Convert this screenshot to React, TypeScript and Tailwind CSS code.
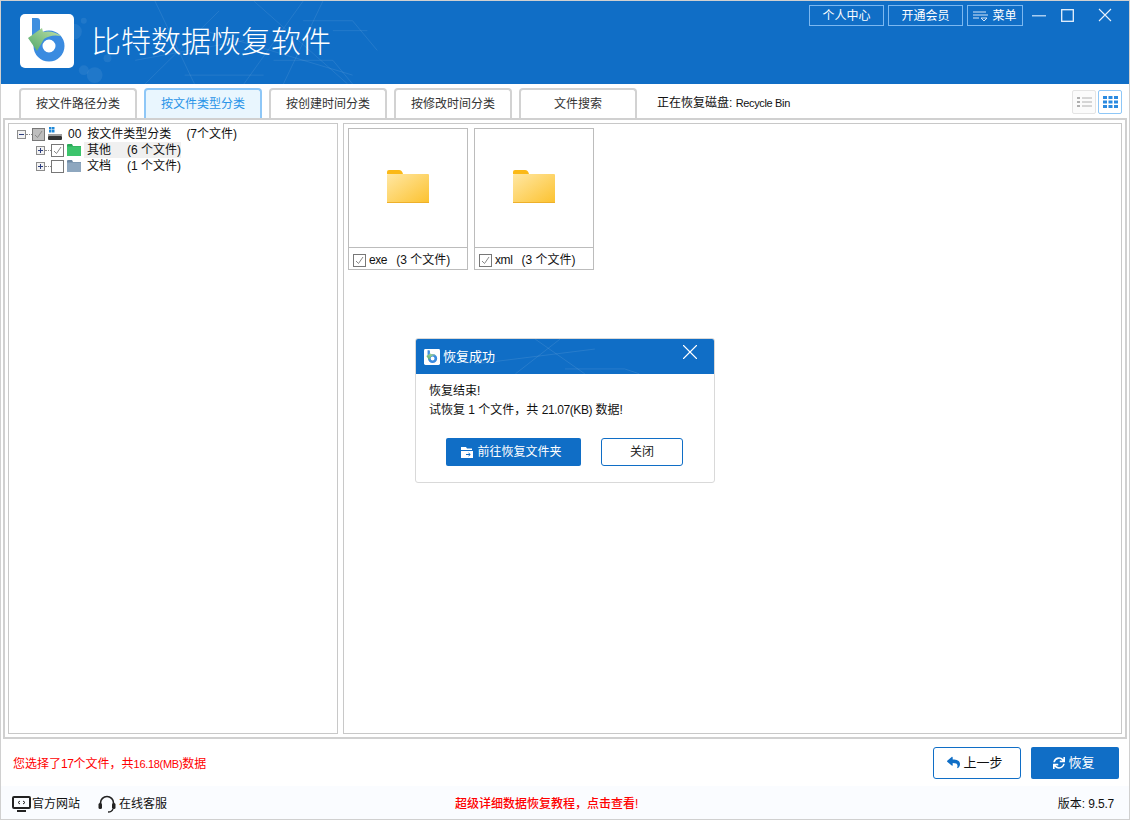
import { X } from 'lucide-react';
import { FaReply, FaSync } from 'react-icons/fa';

const tabs = ['按文件路径分类', '按文件类型分类', '按创建时间分类', '按修改时间分类', '文件搜索'];

const Logo = ({ size, id }: { size: number; id: string }) => (
  <svg width={size} height={size} viewBox="0 0 54 54" className="shrink-0" aria-hidden="true">
    <rect width="54" height="54" rx="5" fill="#fff" />
    <defs>
      <linearGradient id={id} x1="0" y1="1" x2="1" y2="0">
        <stop offset="0" stopColor="#4fa86a" />
        <stop offset="1" stopColor="#c4e2a8" />
      </linearGradient>
    </defs>
    <path d="M12 4h5q3 0 3 3v16h-8z" fill="#3f8fdf" />
    <circle cx="29" cy="32" r="11" fill="none" stroke="#3a8be0" strokeWidth="9" />
    <path d="M8 24 L22 14 L23 18 Q33 16 41 22 Q31 20 24 25 L17 37 Z" fill={`url(#${id})`} />
  </svg>
);

const HeaderPattern = () => (
  <svg className="pointer-events-none absolute inset-0 h-full w-full" viewBox="0 0 1130 84" aria-hidden="true">
    <g fill="#fff" fillOpacity="0.07">
      <circle cx="78" cy="20" r="3" />
      <circle cx="68" cy="31" r="8" />
      <circle cx="89" cy="75" r="8" />
      <circle cx="78" cy="70" r="5" />
      <circle cx="102" cy="58" r="4" />
    </g>
    <g fill="none" stroke="#fff" strokeOpacity="0.09">
      <path d="M140 84 L215 10 M150 0 L190 84 M240 84 L300 0 M200 30 L350 75 M270 60 L330 60 L350 84" />
      <path d="M250 0 L345 84 M130 60 L240 40 M300 20 L350 20 L375 50 M320 0 L280 84" />
      <path d="M180 75 L260 75 M330 30 L365 30" />
    </g>
  </svg>
);

const Check = ({ checked, dim }: { checked?: boolean; dim?: boolean }) => (
  <span
    className={`flex h-[13px] w-[13px] shrink-0 items-center justify-center border border-[#777] ${dim ? 'bg-[#bdbdbd]' : 'bg-white'}`}
  >
    {checked && (
      <svg width="11" height="11" viewBox="0 0 11 11" fill="none" stroke={dim ? '#8a8a8a' : '#888'} strokeWidth="1">
        <path d="M2 6l2.500 2.500L9 2" />
      </svg>
    )}
  </span>
);

const Expander = ({ open }: { open?: boolean }) => (
  <span className="relative flex h-[9px] w-[9px] shrink-0 items-center justify-center border border-[#8c8c8c] bg-[#f2f2f2]">
    <span className="h-px w-[5px] bg-[#2c3e80]" />
    {!open && <span className="absolute h-[5px] w-px bg-[#2c3e80]" />}
  </span>
);

const FolderSmall = ({ color, tab }: { color: string; tab: string }) => (
  <svg width="14" height="12" viewBox="0 0 14 12" className="shrink-0" aria-hidden="true">
    <path d="M0 1q0-1 1-1h4l1 2h8v10H0z" fill={tab} />
    <rect y="2.500" width="14" height="9.500" fill={color} />
  </svg>
);

const DriveIcon = () => (
  <svg width="14" height="14" viewBox="0 0 14 14" className="shrink-0" aria-hidden="true">
    <rect x="1" y="0" width="2.500" height="2.500" fill="#1e88d8" />
    <rect x="4" y="0" width="2.500" height="2.500" fill="#1e88d8" />
    <rect x="1" y="3" width="2.500" height="2.500" fill="#1e88d8" />
    <rect x="4" y="3" width="2.500" height="2.500" fill="#1e88d8" />
    <rect x="0" y="7" width="14" height="2" fill="#a0a0a0" />
    <rect x="0" y="9" width="14" height="4" rx="1" fill="#333" />
  </svg>
);

const FolderBig = ({ id }: { id: string }) => (
  <svg width="42" height="33" viewBox="0 0 42 33" aria-hidden="true">
    <defs>
      <linearGradient id={id} x1="0" y1="0" x2="1" y2="1">
        <stop offset="0" stopColor="#ffe7a3" />
        <stop offset="1" stopColor="#fcc22f" />
      </linearGradient>
    </defs>
    <path d="M0 2q0-2 2-2h10q3 0 4 4h-16z" fill="#fbb917" />
    <path d="M0 5q0-1 1-1h40q1 0 1 1v27q0 1-1 1H1q-1 0-1-1z" fill={`url(#${id})`} />
    <path d="M0 32h42v1H0z" fill="#eeb02a" />
  </svg>
);

const FileTile = ({ name }: { name: string }) => (
  <div className="flex h-[142px] w-[120px] flex-col border border-[#bcbcbc]">
    <div className="flex flex-1 items-center justify-center border-b border-[#bcbcbc] pb-[3px]">
      <FolderBig id={`folder-${name}`} />
    </div>
    <div className="flex h-[21px] items-center gap-[3px] pl-1 pt-[3px] text-xs">
      <Check checked />
      <span className="tracking-[-0.4px]">{name}</span>
      <span className="ml-[6px]">(3 个文件)</span>
    </div>
  </div>
);

const Dialog = () => (
  <div className="absolute left-[414px] top-[337px] h-[145px] w-[300px] overflow-hidden rounded-[3px] border border-[#d9d9d9] bg-white">
    <div className="relative flex h-[35px] items-center gap-[3px] bg-[#106ec6] pl-2 text-[13px] text-white">
      <svg className="pointer-events-none absolute inset-0 h-full w-full" viewBox="0 0 300 35" aria-hidden="true">
        <g fill="none" stroke="#fff" strokeOpacity="0.1">
          <path d="M100 35 L145 0 M120 0 L170 35 M60 25 L180 10 M150 30 L210 30 L225 35" />
        </g>
      </svg>
      <Logo size={16} id="logo-small" />
      <span className="relative">恢复成功</span>
      <X className="absolute right-[11px] top-0" size={26} strokeWidth={1} />
    </div>
    <div className="px-[13px] pt-[8px] text-xs leading-[19px]">
      <p>恢复结束!</p>
      <p>
        试恢复 1 个文件，共 <span className="tracking-[-0.4px]">21.07(KB)</span> 数据!
      </p>
    </div>
    <div className="mt-[18px] flex pl-[30px]">
      <button className="flex h-7 w-[135px] items-center justify-center gap-[3px] rounded-[2px] bg-[#106ec6] pr-1 text-xs text-white">
        <svg width="13" height="12" viewBox="0 0 13 12" fill="#fff" aria-hidden="true">
          <path d="M0 1h5l1 1.500h5V4H0zM0 5h12v7H0z" />
          <path d="M5 8.500h4M7.500 7l1.800 1.500L7.500 10" stroke="#106ec6" fill="none" />
        </svg>
        前往恢复文件夹
      </button>
      <button className="ml-5 h-7 w-[82px] rounded-[3px] border border-[#106ec6] bg-white text-xs text-[#222]">关闭</button>
    </div>
  </div>
);

export default function App() {
  return (
    <div className="relative flex h-[820px] w-[1130px] flex-col overflow-hidden border border-[#d0d0d0] bg-white font-['Liberation_Sans','Noto_Sans_CJK_SC',sans-serif] text-[#111]">
      {/* Title bar */}
      <header className="relative flex h-[83px] shrink-0 items-start bg-[#106ec6] text-white">
        <HeaderPattern />
        <div className="relative ml-[19px] mt-[13px]">
          <Logo size={54} id="logo-big" />
        </div>
        <h1 className="relative ml-[17px] mt-[20px] text-[30px] leading-[42px] font-light">比特数据恢复软件</h1>
        <div className="relative ml-auto mr-[17px] mt-[4px] flex items-start">
          <button className="h-[21px] w-[75px] border border-[#7cb8f0] text-xs">个人中心</button>
          <button className="ml-1 h-[21px] w-[75px] border border-[#7cb8f0] text-xs">开通会员</button>
          <button className="ml-1 flex h-[21px] w-14 items-center justify-center gap-1 border border-[#7cb8f0] text-xs">
            <svg width="15" height="12" viewBox="0 0 15 12" fill="none" stroke="#d5e6f8" aria-hidden="true">
              <path d="M0 2h13M0 5h15M0 8h6M8 8h6l-3 3z" />
            </svg>
            菜单
          </button>
          <svg className="ml-[9px] mt-[10px]" width="14" height="2" viewBox="0 0 14 2" aria-hidden="true">
            <rect width="14" height="1.500" fill="#a9cdf0" />
          </svg>
          <svg className="ml-[15px] mt-[4px]" width="13" height="13" viewBox="0 0 13 13" fill="none" stroke="#e8f2fc" strokeWidth="1.300" aria-hidden="true">
            <rect x="0.700" y="0.700" width="11.600" height="11.600" />
          </svg>
          <svg className="ml-[24px] mt-[3px]" width="14" height="14" viewBox="0 0 14 14" fill="none" stroke="#e8f2fc" strokeWidth="1.100" aria-hidden="true">
            <path d="M1 1l12 12M13 1L1 13" />
          </svg>
        </div>
      </header>

      {/* Tabs */}
      <div className="flex h-[34px] shrink-0 items-end pl-[18px]">
        <div className="flex gap-[7px]">
          {tabs.map((tab) => (
            <div
              key={tab}
              className={
                tab === '按文件类型分类'
                  ? 'flex h-[30px] w-[118px] items-center justify-center rounded-t-[4px] border-[2px] border-b-0 border-[#8ec7f7] bg-[#e9f6fe] text-xs text-[#2a94e8]'
                  : 'flex h-[30px] w-[118px] items-center justify-center rounded-t-[4px] border-[2px] border-b-0 border-[#d2d2d2] bg-white text-xs text-[#333]'
              }
            >
              {tab}
            </div>
          ))}
        </div>
        <span className="mb-[7px] ml-5 text-xs">
          正在恢复磁盘: <span className="text-[11px] tracking-[-0.35px]">Recycle Bin</span>
        </span>
        <div className="mb-[4px] ml-auto mr-[7px] flex gap-[2px]">
          <div className="flex h-6 w-6 items-center justify-center rounded-[2px] border border-[#e4e4e4] bg-[#fbfbfb]">
            <svg width="15" height="12" viewBox="0 0 15 12" aria-hidden="true">
              <path d="M0 1h3v2H0zM0 5h3v2H0zM0 9h3v2H0z" fill="#b0b0b0" />
              <path d="M5 2h10M5 6h10M5 10h10" stroke="#b0b0b0" />
            </svg>
          </div>
          <div className="flex h-6 w-6 items-center justify-center rounded-[2px] border border-[#8ec7f7] bg-white">
            <svg width="15" height="12" viewBox="0 0 15 12" fill="#2a8ae0" aria-hidden="true">
              <path d="M0 0h4v3H0zM5.500 0h4v3h-4zM11 0h4v3h-4zM0 4.500h4v3H0zM5.500 4.500h4v3h-4zM11 4.500h4v3h-4zM0 9h4v3H0zM5.500 9h4v3h-4zM11 9h4v3h-4z" />
            </svg>
          </div>
        </div>
      </div>

      {/* Panels */}
      <div className="mx-[2px] flex h-[621px] shrink-0 gap-[5px] border-2 border-[#d0d0d0] p-[3px]">
        <div className="w-[330px] shrink-0 border border-[#c8c8c8] pl-2 pt-[2px] text-xs leading-4">
          <div className="flex h-4 items-center whitespace-nowrap">
            <Expander open />
            <span className="w-[6px] border-t border-dotted border-[#888]" />
            <Check checked dim />
            <span className="ml-[3px]"><DriveIcon /></span>
            <span className="ml-[6px]">00</span>
            <span className="ml-[6px]">按文件类型分类</span>
            <span className="ml-[15px]">(7个文件)</span>
          </div>
          <div className="flex h-4 items-center whitespace-nowrap pl-[19px]">
            <Expander />
            <span className="w-[6px] border-t border-dotted border-[#888]" />
            <Check checked />
            <span className="ml-[3px]"><FolderSmall color="#3cc46c" tab="#2aa858" /></span>
            <span className="ml-[3px] flex w-[97px] gap-[16px] bg-[#f0f0f0] pl-[3px]">
              <span>其他</span>
              <span>(6 个文件)</span>
            </span>
          </div>
          <div className="flex h-4 items-center whitespace-nowrap pl-[19px]">
            <Expander />
            <span className="w-[6px] border-t border-dotted border-[#888]" />
            <Check />
            <span className="ml-[3px]"><FolderSmall color="#8ea7bf" tab="#6f8aa5" /></span>
            <span className="ml-[3px] flex gap-[16px] pl-[3px]">
              <span>文档</span>
              <span>(1 个文件)</span>
            </span>
          </div>
        </div>
        <div className="flex flex-1 items-start gap-[6px] border border-[#c8c8c8] pl-1 pt-1">
          <FileTile name="exe" />
          <FileTile name="xml" />
        </div>
      </div>

      {/* Selection summary and actions */}
      <div className="flex h-[47px] shrink-0 items-center pl-3 pr-[10px]">
        <span className="pt-[3px] text-xs text-[#ff0000]">
          您选择了<span className="tracking-[-0.4px]">17</span>个文件，共<span className="text-[11px] tracking-[-0.3px]">16.18(MB)</span>数据
        </span>
        <button className="ml-auto flex h-8 w-[88px] items-center justify-center gap-[3px] rounded-[3px] border border-[#106ec6] bg-white pr-1 text-[13px]">
          <FaReply size={13} className="text-[#106ec6]" />
          上一步
        </button>
        <button className="ml-[10px] flex h-8 w-[88px] items-center justify-center gap-[3px] rounded-[2px] bg-[#106ec6] pr-[2px] text-[13px] text-white">
          <FaSync size={12} />
          恢复
        </button>
      </div>

      {/* Footer */}
      <footer className="flex flex-1 items-center bg-[#fafcff] pl-[11px] pr-[15px] pt-[2px] text-xs">
        <svg width="19" height="16" viewBox="0 0 19 16" aria-hidden="true">
          <rect x="1" y="1" width="17" height="11" rx="1" fill="none" stroke="#222" strokeWidth="2" />
          <path d="M5 15h9" stroke="#222" strokeWidth="2" />
          <path d="M8 5L6 6.500 8 8M11 5l2 1.500L11 8" fill="none" stroke="#222" />
        </svg>
        <span className="ml-px">官方网站</span>
        <svg className="ml-[18px]" width="18" height="18" viewBox="0 0 18 18" fill="none" aria-hidden="true">
          <path d="M2.500 10V8a6.500 6.500 0 0 1 13 0v2" stroke="#222" strokeWidth="1.600" />
          <rect x="0.500" y="8" width="3.500" height="6" rx="1.500" fill="#222" />
          <rect x="14" y="8" width="3.500" height="6" rx="1.500" fill="#222" />
          <path d="M15 14q-1 3-5 3" stroke="#222" strokeWidth="1.300" />
        </svg>
        <span className="ml-[3px]">在线客服</span>
        <span className="ml-[288px] font-medium text-[#ff0000]">超级详细数据恢复教程，点击查看!</span>
        <span className="ml-auto">
          版本: <span className="tracking-[-0.2px]">9.5.7</span>
        </span>
      </footer>

      <Dialog />
    </div>
  );
}
